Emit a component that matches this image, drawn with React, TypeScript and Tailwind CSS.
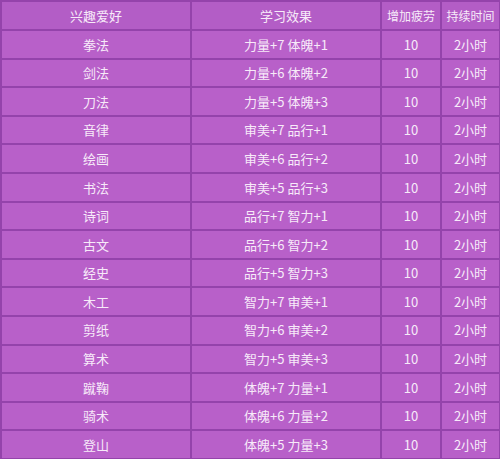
const rows: [string, string][] = [
  ["拳法", "力量+7 体魄+1"],
  ["剑法", "力量+6 体魄+2"],
  ["刀法", "力量+5 体魄+3"],
  ["音律", "审美+7 品行+1"],
  ["绘画", "审美+6 品行+2"],
  ["书法", "审美+5 品行+3"],
  ["诗词", "品行+7 智力+1"],
  ["古文", "品行+6 智力+2"],
  ["经史", "品行+5 智力+3"],
  ["木工", "智力+7 审美+1"],
  ["剪纸", "智力+6 审美+2"],
  ["算术", "智力+5 审美+3"],
  ["蹴鞠", "体魄+7 力量+1"],
  ["骑术", "体魄+6 力量+2"],
  ["登山", "体魄+5 力量+3"],
];

const cell = "border-2 border-[#9443ab] text-center align-middle p-0";

export default function App() {
  return (
    <div
      className="w-[500px] h-[459px] bg-[#b35dc6] text-[#f7eaf9] text-[13px]"
      style={{ fontFamily: '"Noto Sans CJK SC", "Noto Sans", sans-serif' }}
    >
      <table className="w-[499px] border-collapse table-fixed">
        <colgroup>
          <col className="w-[190px]" />
          <col className="w-[190px]" />
          <col className="w-[60px]" />
          <col className="w-[59px]" />
        </colgroup>
        <thead>
          <tr className="h-[29px] bg-[#b35dc6]">
            <th className={`${cell} font-normal`}>兴趣爱好</th>
            <th className={`${cell} font-normal`}>学习效果</th>
            <th className={`${cell} font-normal text-[12px]`}>增加疲劳</th>
            <th className={`${cell} font-normal text-[12px]`}>持续时间</th>
          </tr>
        </thead>
        <tbody>
          {rows.map(([name, effect]) => (
            <tr key={name} className="h-[28.6px] bg-[#b860c9]">
              <td className={cell}>{name}</td>
              <td className={cell}>{effect}</td>
              <td className={cell}>10</td>
              <td className={cell}>2小时</td>
            </tr>
          ))}
        </tbody>
      </table>
    </div>
  );
}
